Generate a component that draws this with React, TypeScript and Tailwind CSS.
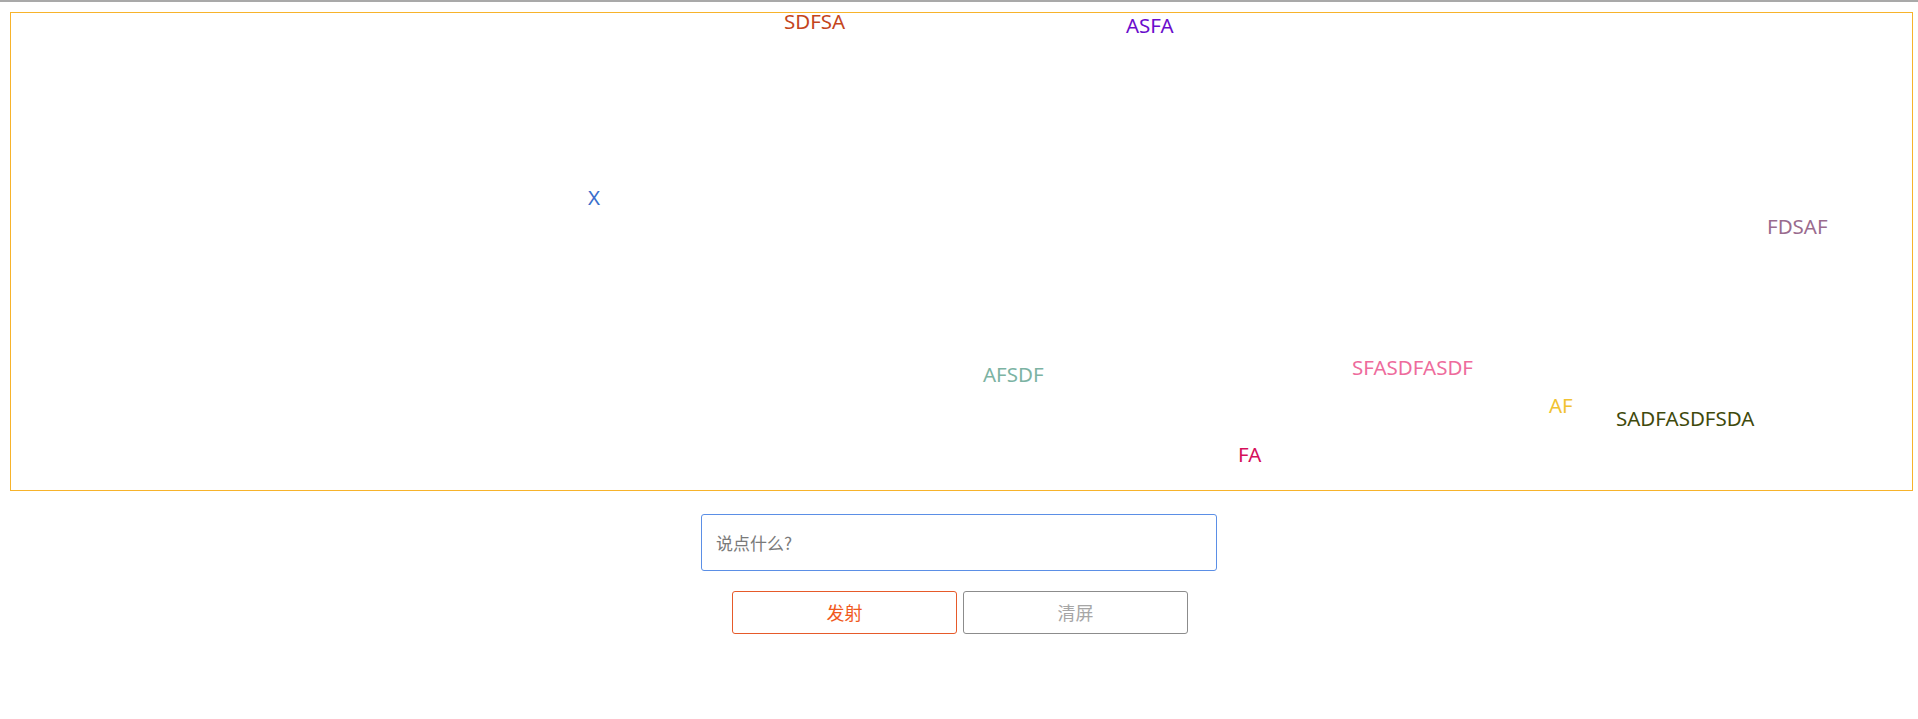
import { useState } from "react";

interface Bullet {
  text: string;
  color: string;
  left: number;
  top: number;
}

const bullets: Bullet[] = [
  { text: "SDFSA", color: "#c4451c", left: 773, top: -5 },
  { text: "ASFA", color: "#6a0dcc", left: 1115, top: -1 },
  { text: "X", color: "#3a6fcc", left: 577, top: 171 },
  { text: "FDSAF", color: "#9a6b8e", left: 1756, top: 200 },
  { text: "AFSDF", color: "#7cb3a3", left: 972, top: 348 },
  { text: "SFASDFASDF", color: "#ee6b9c", left: 1341, top: 341 },
  { text: "AF", color: "#f1c232", left: 1538, top: 379 },
  { text: "SADFASDFSDA", color: "#3f4a0c", left: 1605, top: 392 },
  { text: "FA", color: "#d50f5a", left: 1227, top: 428 },
];

export default function App() {
  const [value, setValue] = useState("");

  return (
    <div className="min-h-screen bg-white font-['Noto_Sans','Noto_Sans_CJK_SC',sans-serif]">
      <div className="h-[2px] bg-[#a9a9a9]" />

      {/* Danmaku screen */}
      <div className="relative ml-[10px] mt-[10px] h-[479px] w-[1903px] border border-[#f7b32b]">
        {bullets.map((b) => (
          <span
            key={b.text}
            className="absolute whitespace-nowrap text-[20.5px] leading-[1.362]"
            style={{ left: b.left, top: b.top, color: b.color }}
          >
            {b.text}
          </span>
        ))}
      </div>

      {/* Controls */}
      <div className="mt-[23px] flex flex-col items-center">
        <input
          autoFocus
          value={value}
          onChange={(e) => setValue(e.target.value)}
          placeholder="说点什么?"
          className="h-[57px] w-[516px] rounded-[3px] border border-[#5b8fe6] px-[14px] text-[17px] text-[#333] outline-none placeholder:text-[#7a7a7a] font-['Noto_Sans_CJK_SC',sans-serif]"
        />
        <div className="mt-[20px] flex gap-[6px] pl-[2px]">
          <button className="h-[43px] w-[225px] rounded-[3px] border border-[#e65a2a] bg-white text-[18px] text-[#f05a1e] font-['Noto_Sans_CJK_SC',sans-serif]">
            发射
          </button>
          <button className="h-[43px] w-[225px] rounded-[3px] border border-[#8c8c8c] bg-white text-[18px] text-[#a6a6a6] font-['Noto_Sans_CJK_SC',sans-serif]">
            清屏
          </button>
        </div>
      </div>
    </div>
  );
}
